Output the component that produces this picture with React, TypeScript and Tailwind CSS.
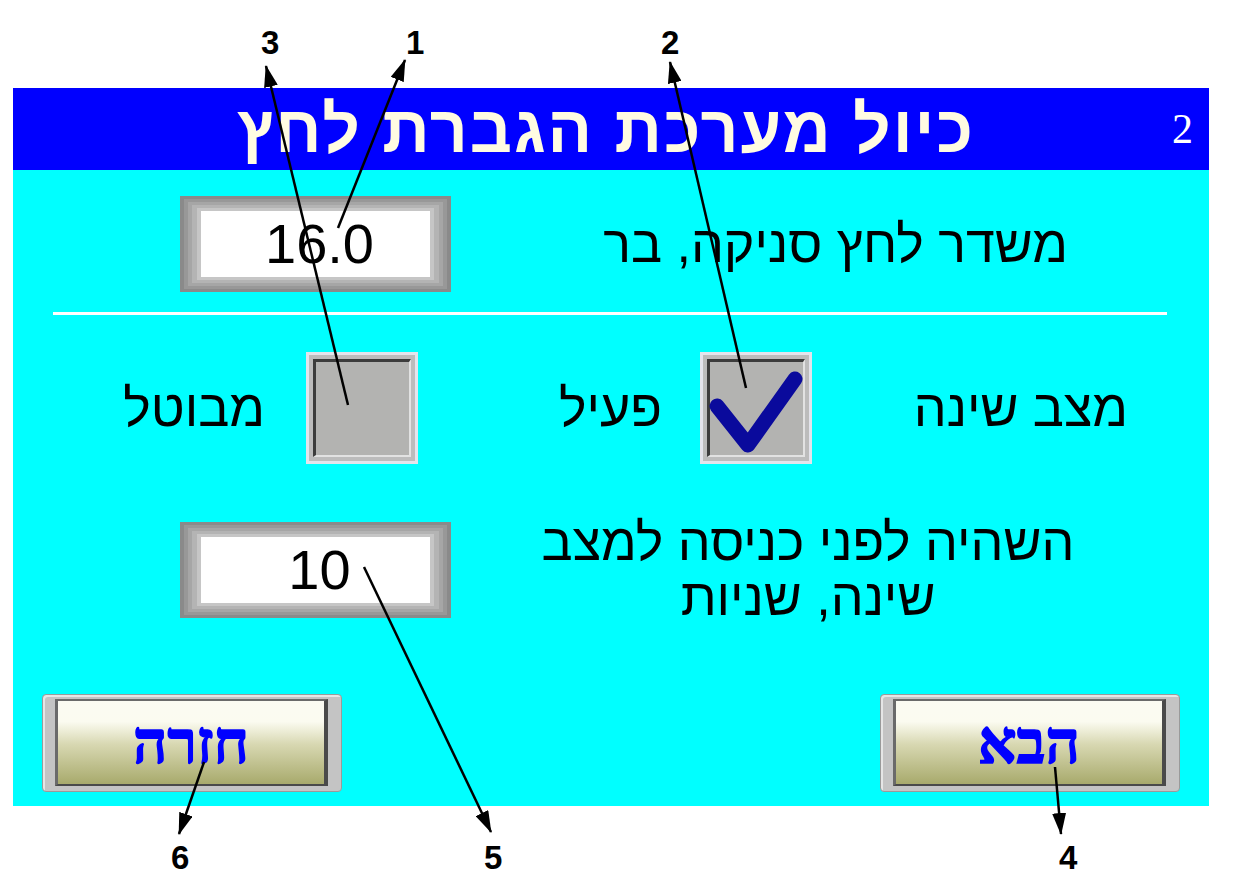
import React from "react";

const sans = { fontFamily: '"Liberation Sans", Arial, sans-serif' };
const serif = { fontFamily: '"Liberation Serif", "Times New Roman", serif' };

const ValueBox = ({ value }: { value: string }) => (
  <div className="w-[271px] h-[96px] bg-[#8a8a8a] px-[4px] py-[3px]">
    <div className="h-full bg-[#989898] px-[4px] py-[3px]">
      <div className="h-full bg-[#a6a6a6] px-[4px] py-[3px]">
        <div className="h-full bg-[#b4b4b4] px-[5px] py-[3px]">
          <div className="h-full bg-[#c6c6c6] px-[4px] py-[3px]">
            <div className="h-full bg-white flex items-center justify-center pl-[8px] text-[56px] leading-none text-black">
              {value}
            </div>
          </div>
        </div>
      </div>
    </div>
  </div>
);

const CheckBox = ({ checked }: { checked?: boolean }) => (
  <div className="w-[112px] h-[112px] border-[3px] border-[#e4e4ec] bg-[#bcbcbc] p-[4px]">
    <div className="relative h-full bg-[#b3b3b1] border-t-[3px] border-l-[3px] border-t-[#3c3c3c] border-l-[#3c3c3c] border-r-[2px] border-b-[2px] border-r-[#e2e2e2] border-b-[#e2e2e2]">
      {checked && (
        <svg viewBox="0 0 112 112" className="absolute left-[-10px] top-[-10px] w-[112px] h-[112px]">
          <path d="M17 54 L48 93 L95 27" fill="none" stroke="#0a0a9c" strokeWidth="15" strokeLinecap="round" strokeLinejoin="round" />
        </svg>
      )}
    </div>
  </div>
);

const NavButton = ({ label }: { label: string }) => (
  <div className="w-[300px] h-[98px] rounded-[4px] bg-[#c4c4c4] border border-[#9a9a9a] pl-[12px] pr-[13px] pt-[4px] pb-[5px] shadow-[inset_2px_2px_0_#e6e6e6]">
    <div className="h-full border-l-[3px] border-t-[2px] border-l-[#6a6a6a] border-t-[#6a6a6a] border-r-[4px] border-b-[2px] border-r-[#4a4a4a] border-b-[#4a4a4a] bg-[linear-gradient(to_bottom,#fbfbf2_0%,#fbfbf0_25%,#d8d8b2_52%,#a8aa6c_100%)] flex items-center justify-center">
      <span
        dir="rtl"
        className="text-[60px] font-bold text-[#0000ff] leading-none [-webkit-text-stroke:1.5px_#0000ff]"
        style={serif}
      >
        {label}
      </span>
    </div>
  </div>
);

const Callout = ({ n, x, y }: { n: string; x: number; y: number }) => (
  <span
    className="absolute text-[33px] font-bold text-black leading-none"
    style={{ left: x, top: y }}
  >
    {n}
  </span>
);

export default function App() {
  const arrows = [
    { x1: 338, y1: 228, x2: 405, y2: 60 },
    { x1: 348, y1: 405, x2: 266, y2: 66 },
    { x1: 746, y1: 388, x2: 670, y2: 62 },
    { x1: 364, y1: 567, x2: 491, y2: 832 },
    { x1: 204, y1: 762, x2: 179, y2: 834 },
    { x1: 1055, y1: 767, x2: 1061, y2: 834 },
  ];

  return (
    <div className="relative w-[1238px] h-[879px] bg-white pt-[88px] pl-[13px]" style={sans}>
      <div className="w-[1196px] h-[718px] flex flex-col bg-[#00ffff]">
        <header className="h-[82px] shrink-0 bg-[#0000ff] grid grid-cols-[1fr_auto_1fr] items-center">
          <div />
          <h1 dir="rtl" className="text-[66px] font-bold text-[#fffbe2] leading-none tracking-[2px] pr-[10px]">
            כיול מערכת הגברת לחץ
          </h1>
          <div className="flex justify-end pr-[16px]">
            <span className="text-[42px] text-white leading-none" style={serif}>2</span>
          </div>
        </header>

        <div className="flex flex-col pt-[26px] text-black text-[52px] leading-none">
          <div className="h-[96px] flex items-center pl-[167px]">
            <ValueBox value="16.0" />
            <div className="flex-1 flex justify-end pr-[141px]">
              <span dir="rtl">משדר לחץ סניקה, בר</span>
            </div>
          </div>

          <div className="mt-[20px] ml-[40px] mr-[42px] h-[3px] bg-white" />

          <div className="mt-[37px] h-[112px] flex items-center">
            <div className="w-[252px] flex justify-end">
              <span dir="rtl">מבוטל</span>
            </div>
            <div className="ml-[41px]">
              <CheckBox />
            </div>
            <div className="w-[244px] flex justify-end">
              <span dir="rtl">פעיל</span>
            </div>
            <div className="ml-[38px]">
              <CheckBox checked />
            </div>
            <div className="w-[316px] flex justify-end">
              <span dir="rtl">מצב שינה</span>
            </div>
          </div>

          <div className="mt-[58px] h-[95px] flex items-center pl-[167px]">
            <ValueBox value="10" />
            <div dir="rtl" className="ml-[87px] w-[540px] text-center leading-[55px]">
              <div>השהיה לפני כניסה למצב</div>
              <div>שינה, שניות</div>
            </div>
          </div>

          <div className="mt-[77px] h-[98px] flex justify-between px-[29px]">
            <NavButton label="חזרה" />
            <NavButton label="הבא" />
          </div>
        </div>
      </div>

      <svg className="absolute inset-0 w-[1238px] h-[879px] pointer-events-none">
        <defs>
          <marker id="head" markerUnits="userSpaceOnUse" markerWidth="22" markerHeight="14" refX="21" refY="7" orient="auto">
            <path d="M0,0 L22,7 L0,14 z" fill="#000" />
          </marker>
        </defs>
        {arrows.map((a, i) => (
          <line key={i} x1={a.x1} y1={a.y1} x2={a.x2} y2={a.y2} stroke="#000" strokeWidth="2.5" markerEnd="url(#head)" />
        ))}
      </svg>

      <Callout n="3" x={261} y={26} />
      <Callout n="1" x={406} y={26} />
      <Callout n="2" x={661} y={26} />
      <Callout n="6" x={171} y={841} />
      <Callout n="5" x={484} y={841} />
      <Callout n="4" x={1059} y={841} />
    </div>
  );
}
